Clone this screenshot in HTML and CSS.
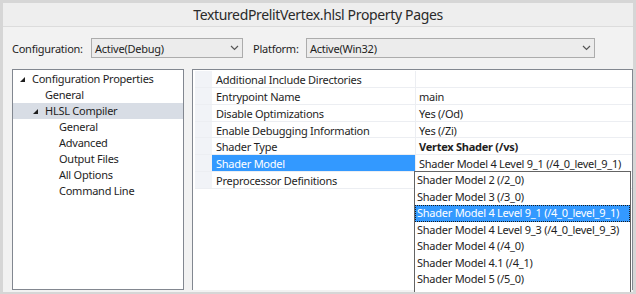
FILE: index.html
```html
<!DOCTYPE html>
<html lang="en">
<head>
  <meta charset="UTF-8" />
  <title>TexturedPrelitVertex.hlsl Property Pages</title>
  <link rel="stylesheet" href="styles.css">
</head>
<body>
  <div class="ventana">
    <div class="titulo">TexturedPrelitVertex.hlsl Property Pages</div>

    <div class="barra">
      <label class="etiqueta">Configuration:</label>
      <div class="combo combo-config">
        <span>Active(Debug)</span>
        <svg width="9" height="6" viewBox="0 0 9 6"><polyline points="1,1 4.5,4.5 8,1" fill="none" stroke="#555" stroke-width="1.2"/></svg>
      </div>
      <label class="etiqueta etiqueta-plat">Platform:</label>
      <div class="combo combo-plat">
        <span>Active(Win32)</span>
        <svg width="9" height="6" viewBox="0 0 9 6"><polyline points="1,1 4.5,4.5 8,1" fill="none" stroke="#555" stroke-width="1.2"/></svg>
      </div>
    </div>

    <div class="paneles">
      <div class="arbol">
        <div class="nodo n0"><span class="flecha"></span>Configuration Properties</div>
        <div class="nodo n1">General</div>
        <div class="nodo n1 activo"><span class="flecha"></span>HLSL Compiler</div>
        <div class="nodo n2">General</div>
        <div class="nodo n2">Advanced</div>
        <div class="nodo n2">Output Files</div>
        <div class="nodo n2">All Options</div>
        <div class="nodo n2">Command Line</div>
      </div>

      <div class="propiedades">
        <div class="fila"><div class="margen"></div><div class="nombre">Additional Include Directories</div><div class="valor"></div></div>
        <div class="fila"><div class="margen"></div><div class="nombre">Entrypoint Name</div><div class="valor">main</div></div>
        <div class="fila"><div class="margen"></div><div class="nombre">Disable Optimizations</div><div class="valor">Yes (/Od)</div></div>
        <div class="fila"><div class="margen"></div><div class="nombre">Enable Debugging Information</div><div class="valor">Yes (/Zi)</div></div>
        <div class="fila"><div class="margen"></div><div class="nombre">Shader Type</div><div class="valor negrita">Vertex Shader (/vs)</div></div>
        <div class="fila"><div class="margen"></div><div class="nombre elegido">Shader Model</div><div class="valor">Shader Model 4 Level 9_1 (/4_0_level_9_1)</div></div>
        <div class="fila"><div class="margen"></div><div class="nombre">Preprocessor Definitions</div><div class="valor"></div></div>

        <div class="lista">
          <div class="opcion">Shader Model 2 (/2_0)</div>
          <div class="opcion">Shader Model 3 (/3_0)</div>
          <div class="opcion marcada">Shader Model 4 Level 9_1 (/4_0_level_9_1)</div>
          <div class="opcion">Shader Model 4 Level 9_3 (/4_0_level_9_3)</div>
          <div class="opcion">Shader Model 4 (/4_0)</div>
          <div class="opcion">Shader Model 4.1 (/4_1)</div>
          <div class="opcion">Shader Model 5 (/5_0)</div>
        </div>
      </div>
    </div>
  </div>
</body>
</html>
```

FILE: styles.css
```css
body {
  margin: 0;
  font-family: 'Segoe UI', 'Noto Sans', sans-serif;
  font-size: 11px;
  letter-spacing: -0.25px;
  color: #1e1e1e;
  background: #d6d6d6;
}

.ventana {
  box-sizing: border-box;
  width: 636px;
  height: 294px;
  border: 3px solid #d6d6d6;
  border-bottom-width: 2px;
  background: #f2f2f2;
  display: flex;
  flex-direction: column;
  overflow: hidden;
}

.titulo {
  height: 23px;
  line-height: 24px;
  background: #eeeeee;
  border-bottom: 1px solid #dcdcdc;
  text-align: center;
  font-size: 14px;
  letter-spacing: -0.35px;
  color: #2a2a2a;
}

.barra {
  display: flex;
  align-items: center;
  padding: 11px 0 0 9px;
  height: 20px;
}

.etiqueta {
  width: 79px;
}

.etiqueta-plat {
  width: 53px;
  margin-left: 10px;
}

.combo {
  box-sizing: border-box;
  height: 20px;
  border: 1px solid #acacac;
  background: #ececec;
  display: flex;
  align-items: center;
  justify-content: space-between;
  padding: 0 3px 0 3px;
}

.combo-config {
  width: 152px;
}

.combo-plat {
  width: 289px;
}

.paneles {
  flex: 1;
  display: flex;
  gap: 8px;
  padding: 11px 0 2px 9px;
  min-height: 0;
}

.arbol {
  width: 170px;
  border: 1px solid #828790;
  background: white;
  padding-top: 1px;
}

.nodo {
  height: 16px;
  line-height: 16px;
  white-space: nowrap;
}

.n0 { padding-left: 7px; }
.n1 { padding-left: 32px; }
.n2 { padding-left: 46px; }
.n1 .flecha { margin-left: -12px; }

.activo {
  background: #d8dde5;
}

.flecha {
  display: inline-block;
  width: 0;
  height: 0;
  border-left: 5px solid transparent;
  border-bottom: 5px solid #1e1e1e;
  margin-right: 7px;
  vertical-align: 1px;
}

.propiedades {
  flex: 1;
  position: relative;
  border: 1px solid #828790;
  border-bottom: none;
  background: white;
  padding: 1px 0 0 2px;
}

.fila {
  display: flex;
  height: 16.85px;
  line-height: 17px;
  border-bottom: 1px solid #eceef2;
  box-sizing: border-box;
}

.margen {
  width: 17px;
  background: #f1f3f7;
}

.nombre {
  width: 199px;
  padding-left: 4px;
  border-right: 1px solid #eceef2;
  white-space: nowrap;
}

.elegido {
  background: #3399ff;
  color: white;
}

.valor {
  flex: 1;
  padding-left: 3px;
  white-space: nowrap;
}

.negrita {
  font-weight: bold;
}

.lista {
  position: absolute;
  left: 221px;
  top: 101px;
  width: 217px;
  height: 140px;
  box-sizing: border-box;
  border: 1px solid #646464;
  background: white;
}

.opcion {
  height: 16.5px;
  line-height: 16.5px;
  padding-left: 2px;
  white-space: nowrap;
}

.marcada {
  background: #3399ff;
  color: white;
  outline: 1px dotted #1a1a1a;
  outline-offset: -1px;
}
```
